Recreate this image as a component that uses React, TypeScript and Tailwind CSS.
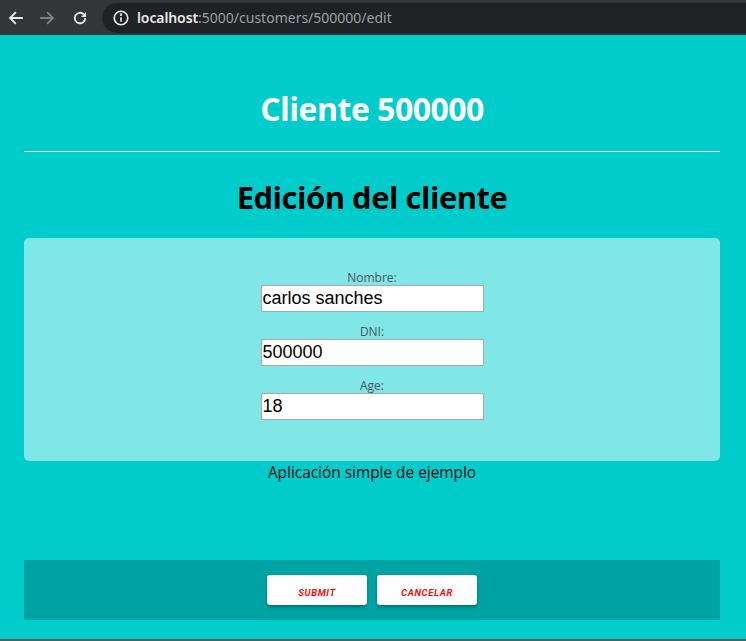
import React from "react";

function ChromeBar() {
  return (
    <div className="h-[35px] bg-[#35363a] flex items-center pl-[4px]" style={{ fontFamily: '"Noto Sans", "Open Sans", sans-serif' }}>
      <div className="w-[20px] h-[20px] flex items-center justify-center ml-[2px]">
        <svg width="18" height="18" viewBox="0 0 24 24" fill="none" stroke="#e8eaed" strokeWidth="2.4" strokeLinecap="square">
          <path d="M20 12H5M11 5l-7 7 7 7" />
        </svg>
      </div>
      <div className="w-[20px] h-[20px] flex items-center justify-center ml-[11px]">
        <svg width="18" height="18" viewBox="0 0 24 24" fill="none" stroke="#7f8184" strokeWidth="2.4" strokeLinecap="square">
          <path d="M4 12h15M13 5l7 7-7 7" />
        </svg>
      </div>
      <div className="w-[20px] h-[20px] flex items-center justify-center ml-[13px]">
        <svg width="18" height="18" viewBox="0 0 24 24" fill="none" stroke="#e8eaed" strokeWidth="2.4">
          <path d="M19 12a7 7 0 1 1-2.05-4.95" />
          <path d="M13.5 10.5L20 4v6.5z" fill="#e8eaed" stroke="none" />
        </svg>
      </div>
      <div className="ml-[12px] flex-1 h-[30px] bg-[#202124] rounded-l-full flex items-center pl-[10px]">
        <svg width="18" height="18" viewBox="0 0 24 24" fill="none" stroke="#e8eaed" strokeWidth="2.2">
          <circle cx="12" cy="12" r="9" />
          <path d="M12 11v6" />
          <circle cx="12" cy="7.5" r="0.6" fill="#e8eaed" />
        </svg>
        <span className="ml-[7px] text-[14px] text-[#e8eaed] font-semibold tracking-[-0.1px]">localhost</span>
        <span className="text-[14px] text-[#9aa0a6]">:5000/customers/500000/edit</span>
      </div>
    </div>
  );
}

function Field({ label, value }: { label: string; value: string }) {
  return (
    <div className="flex flex-col items-center">
      <label className="text-[12px] leading-[15px] text-[#4a5662]" style={{ fontFamily: '"Open Sans", "Noto Sans", sans-serif' }}>
        {label}
      </label>
      <input
        defaultValue={value}
        className="w-[223px] h-[27px] bg-white border border-[#a9a9a9] px-[1px] text-[18px] text-black outline-none"
        style={{ fontFamily: '"Liberation Sans", Arial, sans-serif' }}
      />
    </div>
  );
}

export default function App() {
  return (
    <div className="w-[746px] h-[641px] overflow-hidden flex flex-col bg-[#00cccc]">
      <ChromeBar />
      <div className="flex-1 pl-[24px] pr-[26px] flex flex-col" style={{ fontFamily: '"Open Sans", "Noto Sans", sans-serif' }}>
        <h1 className="text-center text-white font-bold text-[32px] leading-[40px] mt-[54px] tracking-[-0.5px]">Cliente 500000</h1>
        <div className="h-px bg-white mt-[22px]"></div>
        <h2 className="text-center text-black font-bold text-[31px] leading-[40px] mt-[25px] tracking-[-0.5px]">Edición del cliente</h2>
        <div className="mt-[21px] h-[223px] bg-[#80e6e6] rounded-[5px] flex flex-col gap-[12px] pt-[32px] items-center">
          <Field label="Nombre:" value="carlos sanches" />
          <Field label="DNI:" value="500000" />
          <Field label="Age:" value="18" />
        </div>
        <p className="text-center text-[15.4px] leading-[24px] text-[#0a0a0a]">Aplicación simple de ejemplo</p>
        <div className="mt-[75px] h-[60px] bg-[#00a3a3] flex items-center justify-center gap-[10px]">
          <button
            className="w-[100px] h-[30px] bg-white rounded-[3px] shadow-[0_2px_3px_rgba(0,0,0,0.3)] text-[#ff0a0a] text-[9.5px] font-bold italic uppercase tracking-[0.6px] pt-[6px]"
            style={{ fontFamily: 'Roboto, sans-serif' }}
          >
            Submit
          </button>
          <button
            className="w-[100px] h-[30px] bg-white rounded-[3px] shadow-[0_2px_3px_rgba(0,0,0,0.3)] text-[#ff0a0a] text-[9.5px] font-bold italic uppercase tracking-[0.6px] pt-[6px]"
            style={{ fontFamily: 'Roboto, sans-serif' }}
          >
            Cancelar
          </button>
        </div>
      </div>
      <div className="h-[2px] bg-[#5a5d63]"></div>
    </div>
  );
}
